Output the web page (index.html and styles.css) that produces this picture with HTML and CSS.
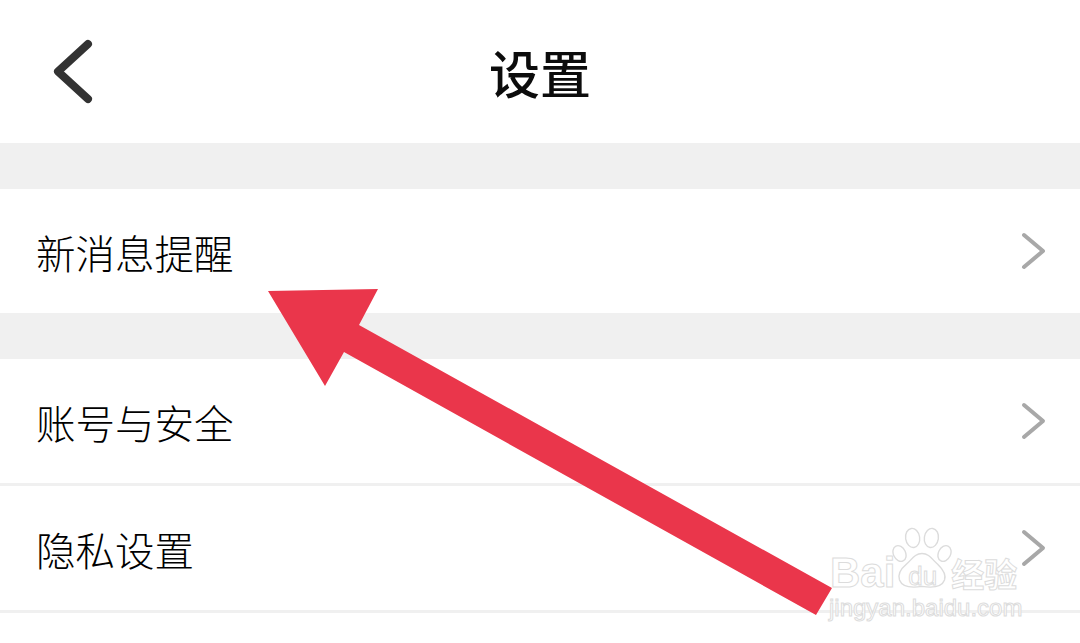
FILE: index.html
```html
<!DOCTYPE html>
<html lang="zh-CN">
<head>
    <meta charset="UTF-8">
    <title>设置</title>
    <link rel="stylesheet" href="styles.css">
</head>
<body>
    <div class="page">
        <div class="header">
            <svg class="back" width="60" height="80" viewBox="0 0 60 80">
                <path d="M46 12 L16 39.5 L46 67" />
            </svg>
            <h1>设置</h1>
        </div>
        <div class="gap"></div>
        <div class="row">
            <span>新消息提醒</span>
            <svg class="chevron" width="40" height="50" viewBox="0 0 40 50"><path d="M6 9 L25 25 L6 41" /></svg>
        </div>
        <div class="gap"></div>
        <div class="row line">
            <span>账号与安全</span>
            <svg class="chevron" width="40" height="50" viewBox="0 0 40 50"><path d="M6 9 L25 25 L6 41" /></svg>
        </div>
        <div class="row line">
            <span>隐私设置</span>
            <svg class="chevron" width="40" height="50" viewBox="0 0 40 50"><path d="M6 9 L25 25 L6 41" /></svg>
        </div>

        <svg class="arrow" width="1080" height="643" viewBox="0 0 1080 643">
            <polygon points="268,291 378,289 359,325 832,588 816,615 344,352 325,386" />
        </svg>

        <div class="watermark">
            <svg class="paw" width="60" height="64" viewBox="0 0 64 70" preserveAspectRatio="none">
                <ellipse cx="22" cy="12" rx="7.5" ry="10.5" transform="rotate(-8 22 12)" />
                <ellipse cx="42" cy="12" rx="7.5" ry="10.5" transform="rotate(8 42 12)" />
                <ellipse cx="8" cy="29" rx="6.5" ry="9" transform="rotate(-25 8 29)" />
                <ellipse cx="56" cy="29" rx="6.5" ry="9" transform="rotate(25 56 29)" />
                <path d="M32 29 C24 29 21 36 15 41 C8 47 6 52 8 58 C11 66 20 67 32 65 C44 67 53 66 56 58 C58 52 55 47 49 41 C43 36 40 29 32 29 Z" />
            </svg>
            <div class="wm-top"><span class="wm-bai">Bai</span><span class="wm-du">du</span><span class="wm-cn">经验</span></div>
            <div class="wm-url">jingyan.baidu.com</div>
        </div>
    </div>
</body>
</html>
```

FILE: styles.css
```css
* {
    box-sizing: border-box;
}
html, body {
    margin: 0;
    padding: 0;
}
body {
    background-color: #fff;
    font-family: "Noto Sans CJK SC", "Noto Sans", sans-serif;
    overflow: hidden;
}
.page {
    position: relative;
    width: 1080px;
    height: 643px;
    overflow: hidden;
}
.header {
    height: 143px;
    display: flex;
    align-items: center;
    justify-content: center;
    position: relative;
}
.header h1 {
    margin: 0;
    font-size: 51px;
    font-weight: 500;
    color: #0c0c0c;
    line-height: 60px;
}
.back {
    position: absolute;
    left: 42px;
    top: 32px;
}
.back path {
    fill: none;
    stroke: #333;
    stroke-width: 8;
    stroke-linecap: round;
    stroke-linejoin: round;
}
.gap {
    height: 46px;
    background-color: #f0f0f0;
}
.row {
    height: 124px;
    padding: 0 22px 0 36px;
    display: flex;
    align-items: center;
    justify-content: space-between;
    font-size: 39.5px;
    font-weight: 300;
    color: #000;
}
.row.line {
    height: 127px;
    border-bottom: 3px solid #f0f0f0;
}
.chevron path {
    fill: none;
    stroke: #a8a8a8;
    stroke-width: 4;
    stroke-linecap: round;
    stroke-linejoin: round;
}
.arrow {
    position: absolute;
    left: 0;
    top: 0;
}
.arrow polygon {
    fill: #ea364b;
}
.watermark {
    position: absolute;
    left: 828px;
    top: 526px;
    width: 200px;
    height: 100px;
    font-family: "Liberation Sans", sans-serif;
    color: #fff;
    -webkit-text-stroke: 1px #dcdcdc;
}
.paw {
    position: absolute;
    left: 64px;
    top: 1px;
}
.paw ellipse, .paw path {
    fill: #fff;
    stroke: #dcdcdc;
    stroke-width: 1.5;
}
.wm-top {
    position: absolute;
    left: 2px;
    top: 22px;
    display: flex;
    align-items: baseline;
    white-space: nowrap;
}
.wm-bai {
    font-size: 42px;
    font-weight: 700;
    line-height: 50px;
}
.wm-du {
    font-size: 26px;
    margin-left: 13px;
    position: relative;
    top: -2px;
}
.wm-cn {
    font-family: "Noto Sans CJK SC", sans-serif;
    font-size: 33px;
    font-weight: 700;
    margin-left: 14px;
}
.wm-url {
    position: absolute;
    left: 1px;
    top: 69px;
    font-size: 24px;
    line-height: 26px;
    white-space: nowrap;
}
```
